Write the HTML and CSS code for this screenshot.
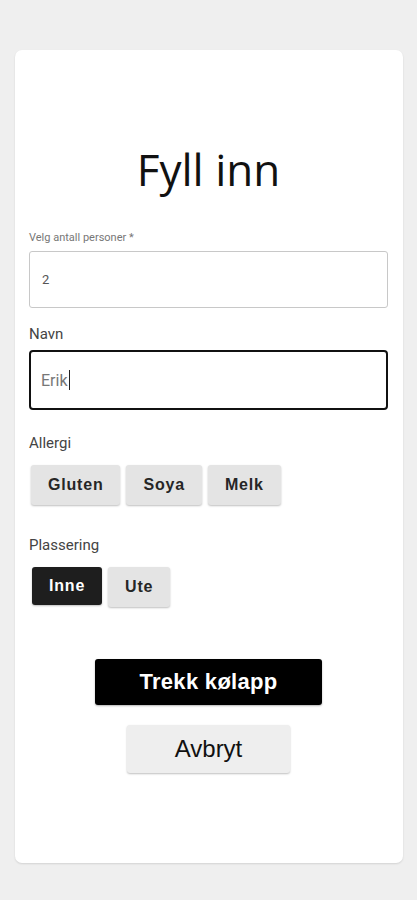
FILE: index.html
```html
<!DOCTYPE html>
<html lang="no">
<head>
<meta charset="utf-8">
<title>Fyll inn</title>
<link rel="stylesheet" href="styles.css">
</head>
<body>
<main class="card">
  <h1 class="title">Fyll inn</h1>
  <div class="field">
    <label class="small-label">Velg antall personer *</label>
    <div class="input input-plain">2</div>
  </div>
  <div class="field">
    <label class="label">Navn</label>
    <div class="input input-focus">Erik<span class="caret"></span></div>
  </div>
  <div class="group">
    <div class="label">Allergi</div>
    <div class="chips">
      <button class="chip">Gluten</button>
      <button class="chip">Soya</button>
      <button class="chip">Melk</button>
    </div>
  </div>
  <div class="group">
    <div class="label">Plassering</div>
    <div class="chips">
      <button class="chip chip-active">Inne</button>
      <button class="chip">Ute</button>
    </div>
  </div>
  <div class="actions">
    <button class="btn-primary">Trekk kølapp</button>
    <button class="btn-secondary">Avbryt</button>
  </div>
</main>
</body>
</html>
```

FILE: styles.css
```css
html, body {
  margin: 0;
  padding: 0;
  background: #efefef;
  font-family: Roboto, "Liberation Sans", sans-serif;
}
body {
  padding: 50px 14px 37px 15px;
}
.card {
  background: #fff;
  border-radius: 7px;
  box-shadow: 0 1px 2px rgba(0,0,0,0.12);
  height: 813px;
  box-sizing: border-box;
  padding: 90px 15px 0 14px;
}
.title {
  margin: 0 0 33px;
  text-align: center;
  font-family: "Open Sans", sans-serif;
  font-weight: 400;
  font-size: 44px;
  line-height: 58px;
  color: #111;
}
.field {
  display: flex;
  flex-direction: column;
}
.small-label {
  font-size: 11px;
  color: #777;
  line-height: 14px;
  margin-bottom: 6px;
}
.label {
  font-size: 15px;
  color: #444;
  line-height: 20px;
}
.input {
  box-sizing: border-box;
  height: 57px;
  display: flex;
  align-items: center;
  padding-left: 12px;
  border-radius: 3px;
  color: #555;
}
.input-plain {
  border: 1px solid #c8c8c8;
  font-size: 13px;
  margin-bottom: 16px;
}
.field + .field .label {
  margin-bottom: 6px;
}
.input-focus {
  border: 2px solid #111;
  height: 60px;
  padding-left: 10px;
  font-size: 16px;
  color: #777;
  border-radius: 4px;
  margin-bottom: 23px;
}
.caret {
  display: inline-block;
  width: 1px;
  height: 20px;
  background: #222;
  margin-left: 1px;
}
.group {
  margin-bottom: 30px;
}
.chips {
  display: flex;
  gap: 6px;
  padding-left: 2px;
  margin-top: 12px;
}
.chip {
  font-family: "Liberation Sans", Arial, sans-serif;
  font-weight: 700;
  font-size: 16px;
  letter-spacing: 0.8px;
  color: #262626;
  background: #e4e4e4;
  border: none;
  border-radius: 3px;
  height: 40px;
  padding: 0 17px;
  box-shadow: 0 1px 2px rgba(0,0,0,0.25);
}
.chip-active {
  background: #1e1e1e;
  color: #fff;
  height: 38px;
  margin-left: 1px;
}
.actions {
  display: flex;
  flex-direction: column;
  align-items: center;
  gap: 20px;
  margin-top: 52px;
}
.btn-primary {
  font-family: "Liberation Sans", Arial, sans-serif;
  font-weight: 700;
  font-size: 22px;
  letter-spacing: 0.3px;
  color: #fff;
  background: #000;
  border: none;
  border-radius: 3px;
  width: 227px;
  height: 46px;
  box-shadow: 0 1px 2px rgba(0,0,0,0.3);
}
.btn-secondary {
  font-family: "Liberation Sans", Arial, sans-serif;
  font-size: 24px;
  color: #111;
  background: #eee;
  border: none;
  border-radius: 3px;
  width: 163px;
  height: 48px;
  box-shadow: 0 1px 2px rgba(0,0,0,0.25);
}
```
